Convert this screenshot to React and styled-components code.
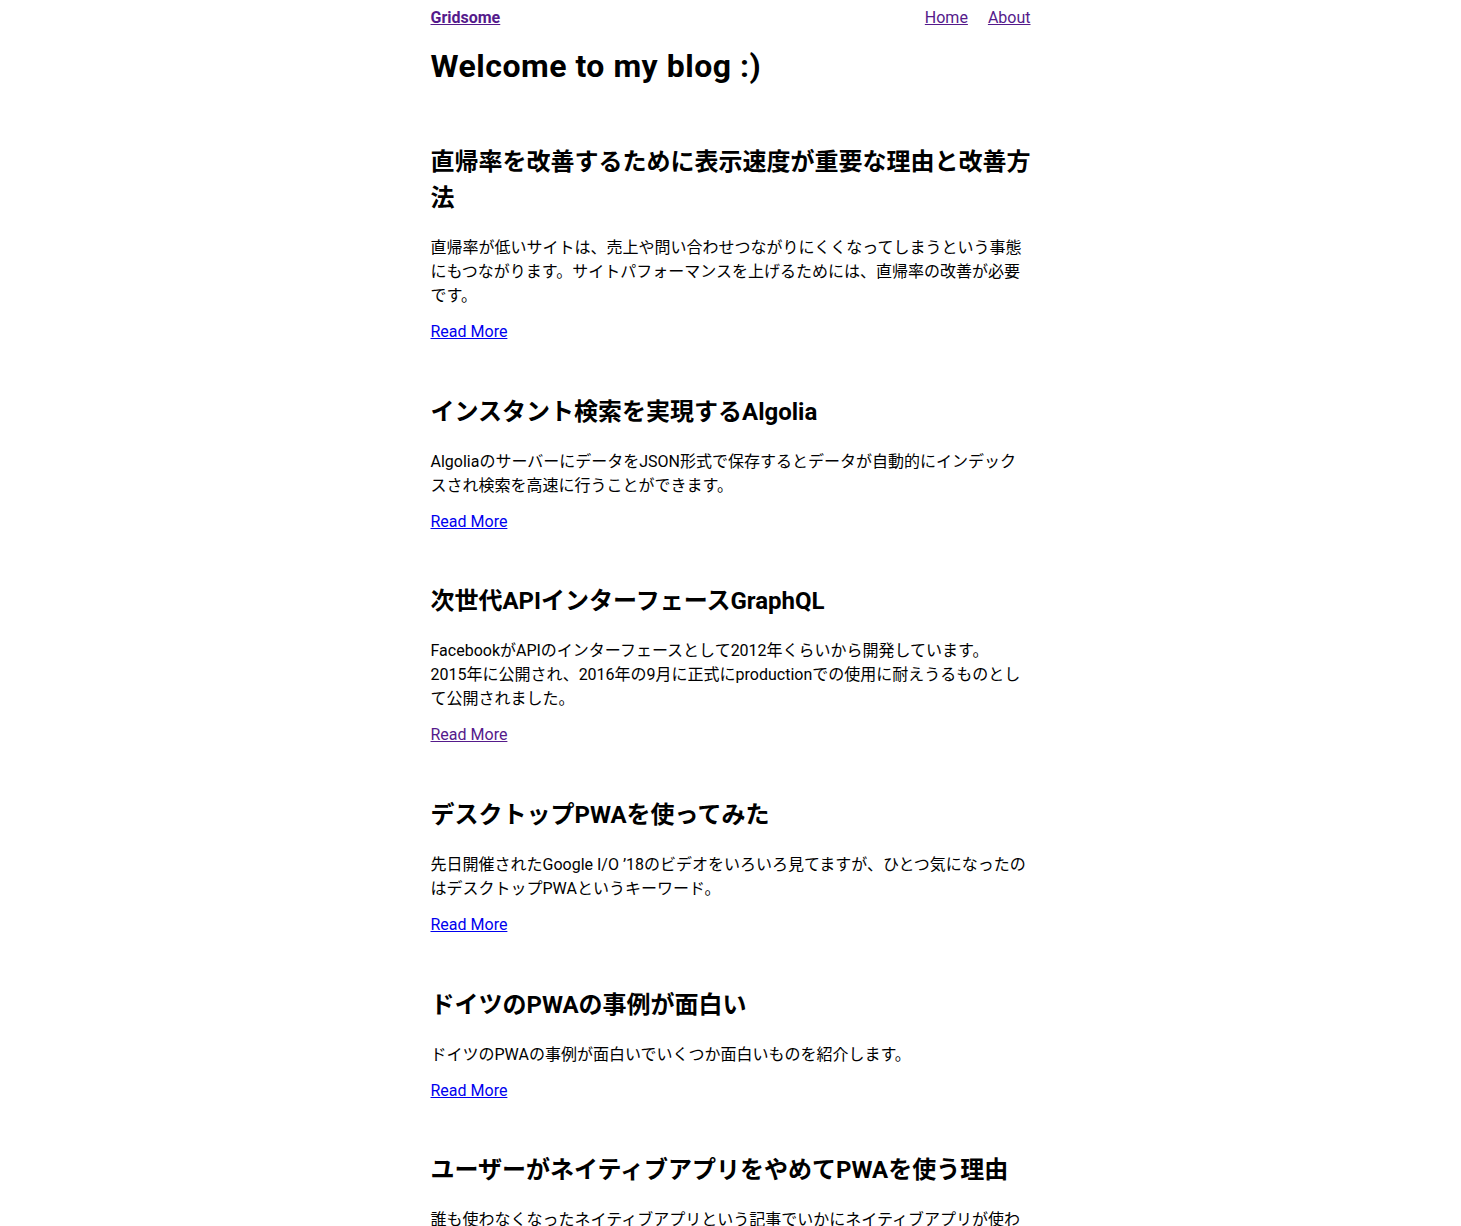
import React from 'react'
import styled, { createGlobalStyle } from 'styled-components'

const GlobalStyle = createGlobalStyle`
    body {
        margin: 0;
        background: #ffffff;
        color: #000000;
        font-family: Roboto, "Noto Sans CJK JP", sans-serif;
        font-size: 16px;
        line-height: 1.5;
    }
`

const LayoutS = styled.div`
    max-width: 600px;
    margin: 0 auto;
`
const HeaderS = styled.header`
    display: flex;
    justify-content: space-between;
    align-items: center;
    height: 36px;
`
const BrandS = styled.a`
    font-weight: 700;
    color: #551a8b;
    text-decoration: underline;
`
const NavS = styled.nav`
    display: flex;
    gap: 20px;
`
const NavLinkS = styled.a`
    color: #551a8b;
    text-decoration: underline;
`
const TitleS = styled.h1`
    margin: 6px 0 54px;
    font-size: 32px;
    line-height: 48px;
    font-weight: 700;
    letter-spacing: 0.5px;
`
const PostsS = styled.div`
    display: flex;
    flex-direction: column;
    gap: 49.7px;
`
const PostS = styled.article`
    display: flex;
    flex-direction: column;
`
const PostTitleS = styled.h2`
    margin: 0 0 20px;
    font-size: 24px;
    line-height: 36px;
    font-weight: 700;
`
const ExcerptS = styled.p`
    margin: 0 0 12px;
    font-size: 16px;
    line-height: 24px;
`
const ReadMoreS = styled.a`
    align-self: flex-start;
    color: ${ props => props.visited ? '#551a8b' : '#0000ee' };
    text-decoration: underline;
    line-height: 24px;
`

const posts = [{
    title: '直帰率を改善するために表示速度が重要な理由と改善方法',
    excerpt: '直帰率が低いサイトは、売上や問い合わせつながりにくくなってしまうという事態にもつながります。サイトパフォーマンスを上げるためには、直帰率の改善が必要です。'
},{
    title: 'インスタント検索を実現するAlgolia',
    excerpt: 'AlgoliaのサーバーにデータをJSON形式で保存するとデータが自動的にインデックスされ検索を高速に行うことができます。'
},{
    title: '次世代APIインターフェースGraphQL',
    excerpt: 'FacebookがAPIのインターフェースとして2012年くらいから開発しています。2015\u2060年に公開され、2016年の9月に正式にproductionでの使用に耐えうるものとして公開されました。',
    visited: true
},{
    title: 'デスクトップPWAを使ってみた',
    excerpt: '先日開催されたGoogle I/O ’18のビデオをいろいろ見てますが、ひとつ気になったのはデスクトップPWAというキーワード。'
},{
    title: 'ドイツのPWAの事例が面白い',
    excerpt: 'ドイツのPWAの事例が面白いでいくつか面白いものを紹介します。'
},{
    title: 'ユーザーがネイティブアプリをやめてPWAを使う理由',
    excerpt: '誰も使わなくなったネイティブアプリという記事でいかにネイティブアプリが使われなくなっているのかが紹介されています。'
}]

const App = () => {
    return(
        <LayoutS>
            <GlobalStyle />
            <HeaderS>
                <BrandS href='#'>Gridsome</BrandS>
                <NavS>
                    <NavLinkS href='#'>Home</NavLinkS>
                    <NavLinkS href='#'>About</NavLinkS>
                </NavS>
            </HeaderS>
            <TitleS>Welcome to my blog :)</TitleS>
            <PostsS>
                {
                    posts.map( post =>
                        <PostS key={ post.title }>
                            <PostTitleS>{ post.title }</PostTitleS>
                            <ExcerptS>{ post.excerpt }</ExcerptS>
                            <ReadMoreS href='#' visited={ post.visited ? 1 : 0 }>Read More</ReadMoreS>
                        </PostS>
                    )
                }
            </PostsS>
        </LayoutS>
    )
}
export default App
